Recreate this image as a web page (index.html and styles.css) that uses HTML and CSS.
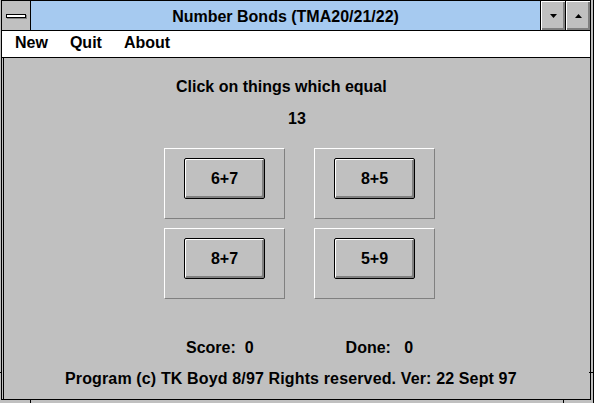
FILE: index.html
```html
<!DOCTYPE html>
<html>
<head>
<meta charset="utf-8">
<link rel="stylesheet" href="styles.css">
</head>
<body>
<div class="window">
  <div class="inner">
    <div class="titlebar">
      <div class="sysbox">
        <svg width="21" height="5" viewBox="0 0 21 5"><rect x="1" y="4" width="20" height="1" fill="#808080"/><rect x="20" y="1" width="1" height="4" fill="#808080"/><rect x="0.5" y="0.5" width="19" height="3" fill="#fff" stroke="#000"/></svg>
      </div>
      <div class="title">Number Bonds (TMA20/21/22)</div>
      <div class="tbtn"><svg width="7" height="4" viewBox="0 0 7 4"><polygon points="0,0 7,0 3.5,4" fill="#000"/></svg></div>
      <div class="tbtn"><svg width="7" height="4" viewBox="0 0 7 4"><polygon points="0,4 7,4 3.5,0" fill="#000"/></svg></div>
    </div>
    <div class="menubar">
      <span class="menu-item">New</span>
      <span class="menu-item">Quit</span>
      <span class="menu-item">About</span>
    </div>
    <div class="client">
      <p class="prompt">Click on things which equal</p>
      <p class="target">13</p>
      <div class="grid">
        <div class="cell"><div class="btn">6+7</div></div>
        <div class="cell"><div class="btn">8+5</div></div>
        <div class="cell"><div class="btn">8+7</div></div>
        <div class="cell"><div class="btn">5+9</div></div>
      </div>
      <div class="scores">
        <span class="score">Score:&nbsp; 0</span>
        <span class="done">Done:&nbsp;&nbsp; 0</span>
      </div>
      <p class="copy">Program (c) TK Boyd 8/97 Rights reserved. Ver: 22 Sept 97</p>
    </div>
  </div>
  <span class="tick tick-l"></span>
  <span class="tick tick-r"></span>
  <span class="tick tick-bl"></span>
  <span class="tick tick-br"></span>
</div>
</body>
</html>
```

FILE: styles.css
```css
html, body {
  margin: 0;
  padding: 0;
  background: #c0c0c0;
}

body {
  font-family: "Liberation Sans", Arial, sans-serif;
  font-weight: bold;
  font-size: 16px;
  color: #000;
}

.window {
  position: relative;
  width: 594px;
  height: 403px;
  box-sizing: border-box;
  padding: 0 2px 3px 1px;
  border-right: 1px solid #000;
  background: #c0c0c0;
  display: flex;
  overflow: hidden;
}

.inner {
  flex: 1;
  border: 1px solid #000;
  display: flex;
  flex-direction: column;
  min-width: 0;
}

.titlebar {
  height: 29px;
  display: flex;
  background: #a6caf0;
  border-bottom: 1px solid #000;
}

.sysbox {
  box-sizing: border-box;
  width: 29px;
  background: #c0c0c0;
  border-right: 1px solid #000;
  padding: 13px 0 0 4px;
}

.sysbox svg {
  display: block;
}

.title {
  flex: 1;
  text-align: center;
  padding-top: 3px;
  line-height: 26px;
  white-space: nowrap;
}

.tbtn {
  width: 24px;
  border-left: 1px solid #000;
  background: #c0c0c0;
  box-shadow: inset 1px 1px #fff, inset -2px -2px #808080;
  display: flex;
  align-items: center;
  justify-content: center;
}

.tbtn svg {
  display: block;
}

.menubar {
  height: 26px;
  background: #fff;
  border-bottom: 1px solid #000;
  display: flex;
  padding-left: 2px;
  line-height: 24px;
}

.menu-item {
  padding: 0 11px;
}

.client {
  flex: 1;
  margin-left: 1px;
  border-left: 1px solid #000;
  display: flex;
  flex-direction: column;
  align-items: flex-start;
}

.client p {
  margin: 0;
  line-height: 18px;
  white-space: nowrap;
}

.client .prompt {
  margin: 20px 0 0 172px;
}

.client .target {
  margin: 14px 0 0 284px;
}

.grid {
  display: grid;
  grid-template-columns: 121px 121px;
  grid-auto-rows: 71px;
  column-gap: 29px;
  row-gap: 9px;
  margin: 20px 0 0 160px;
}

.cell {
  box-sizing: border-box;
  border: 1px solid;
  border-color: #fff #808080 #808080 #fff;
  padding: 9px 0 0 19px;
}

.btn {
  box-sizing: border-box;
  width: 81px;
  height: 41px;
  border: 1px solid #000;
  border-radius: 2px;
  background: #c0c0c0;
  box-shadow: inset 1px 1px #fff, inset -2px -2px #808080;
  display: flex;
  align-items: center;
  justify-content: center;
  padding-top: 1px;
}

.scores {
  display: flex;
  margin: 40px 0 0 182px;
  line-height: 18px;
  white-space: nowrap;
}

.done {
  margin-left: 92px;
}

.client .copy {
  margin: 13px 0 0 61px;
  letter-spacing: 0.14px;
}

.tick {
  position: absolute;
  background: #000;
}

.tick-l {
  left: 0;
  top: 372px;
  width: 2px;
  height: 1px;
}

.tick-r {
  right: 0;
  top: 372px;
  width: 4px;
  height: 1px;
}

.tick-bl {
  left: 30px;
  bottom: 0;
  width: 1px;
  height: 3px;
}

.tick-br {
  left: 563px;
  bottom: 0;
  width: 1px;
  height: 3px;
}
```
